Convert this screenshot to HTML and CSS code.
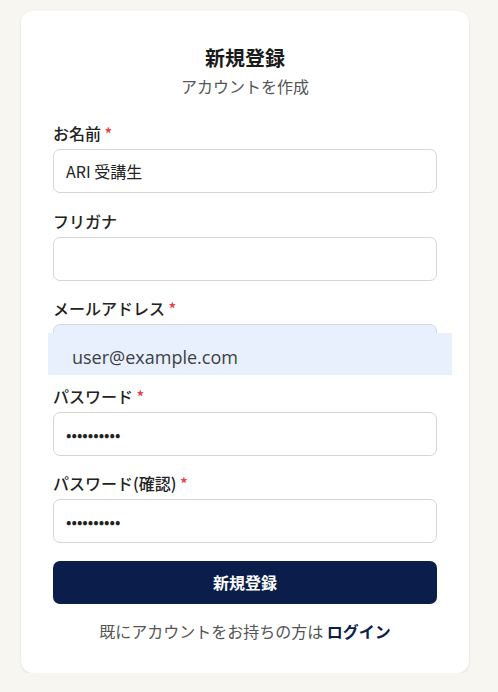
FILE: index.html
```html
<!DOCTYPE html>
<html lang="ja">
<head>
<meta charset="utf-8">
<link rel="stylesheet" href="styles.css">
</head>
<body>
<div class="card">
  <h1 class="title">新規登録</h1>
  <p class="subtitle">アカウントを作成</p>
  <form class="form">
    <div class="field">
      <label class="label">お名前 <span class="req">*</span></label>
      <input class="input" type="text" value="ARI 受講生">
    </div>
    <div class="field">
      <label class="label">フリガナ</label>
      <input class="input" type="text" value="">
    </div>
    <div class="field email-field">
      <label class="label">メールアドレス <span class="req">*</span></label>
      <input class="input autofill" type="text" value="">
      <div class="autofill-preview">user@example.com</div>
    </div>
    <div class="field">
      <label class="label">パスワード <span class="req">*</span></label>
      <input class="input" type="password" value="abcdefghij">
    </div>
    <div class="field">
      <label class="label">パスワード(確認) <span class="req">*</span></label>
      <input class="input" type="password" value="abcdefghij">
    </div>
    <button class="submit" type="button">新規登録</button>
  </form>
  <p class="footer">既にアカウントをお持ちの方は <a class="login">ログイン</a></p>
</div>
</body>
</html>
```

FILE: styles.css
```css
* { box-sizing: border-box; }
html, body { margin: 0; padding: 0; }
body {
  background: #f8f6f0;
  font-family: "Noto Sans CJK JP", "Noto Sans", sans-serif;
  color: #222;
  padding: 11px 0 0 21px;
}
.card {
  width: 448px;
  height: 662px;
  background: #fff;
  border-radius: 12px;
  box-shadow: 0 1px 3px rgba(0,0,0,0.10);
  padding: 33px 32px 31px;
}
.title {
  margin: 0;
  font-size: 20px;
  line-height: 28px;
  font-weight: 700;
  text-align: center;
  color: #1a1a1a;
}
.subtitle {
  margin: 3px 0 0;
  font-size: 16px;
  line-height: 22px;
  text-align: center;
  color: #555;
}
.form {
  margin-top: 26px;
  display: flex;
  flex-direction: column;
}
.field {
  display: flex;
  flex-direction: column;
  gap: 6px;
  margin-bottom: 17.5px;
}
.email-field { position: relative; }
.label {
  font-size: 16px;
  line-height: 20px;
  font-weight: 500;
  color: #222;
}
.req { color: #e53e3e; }
.input {
  width: 384px;
  height: 44px;
  border: 1px solid #d6d6d6;
  border-radius: 7px;
  padding: 0 12px;
  font-family: "Noto Sans CJK JP", "Noto Sans", sans-serif;
  font-size: 16px;
  color: #222;
  background: #fff;
  outline: none;
}
.input.autofill { background: #e8f0fe; border-color: #d0d7e2; }
.autofill-preview {
  position: absolute;
  left: -5px;
  top: 35px;
  width: 404px;
  height: 42px;
  background: #e8f0fe;
  color: #3c4043;
  font-family: "Open Sans", "Noto Sans", sans-serif;
  font-size: 18px;
  padding: 7px 0 0 24px;
  line-height: 34px;
}
.submit {
  width: 384px;
  height: 43px;
  border: none;
  border-radius: 7px;
  background: #0b1d4a;
  color: #fff;
  font-family: "Noto Sans CJK JP", "Noto Sans", sans-serif;
  font-size: 16px;
  font-weight: 700;
}
.footer {
  margin: 17px 0 0;
  font-size: 16px;
  line-height: 20px;
  text-align: center;
  color: #555;
}
.login {
  color: #0b1d4a;
  font-weight: 700;
  text-decoration: none;
}
```
